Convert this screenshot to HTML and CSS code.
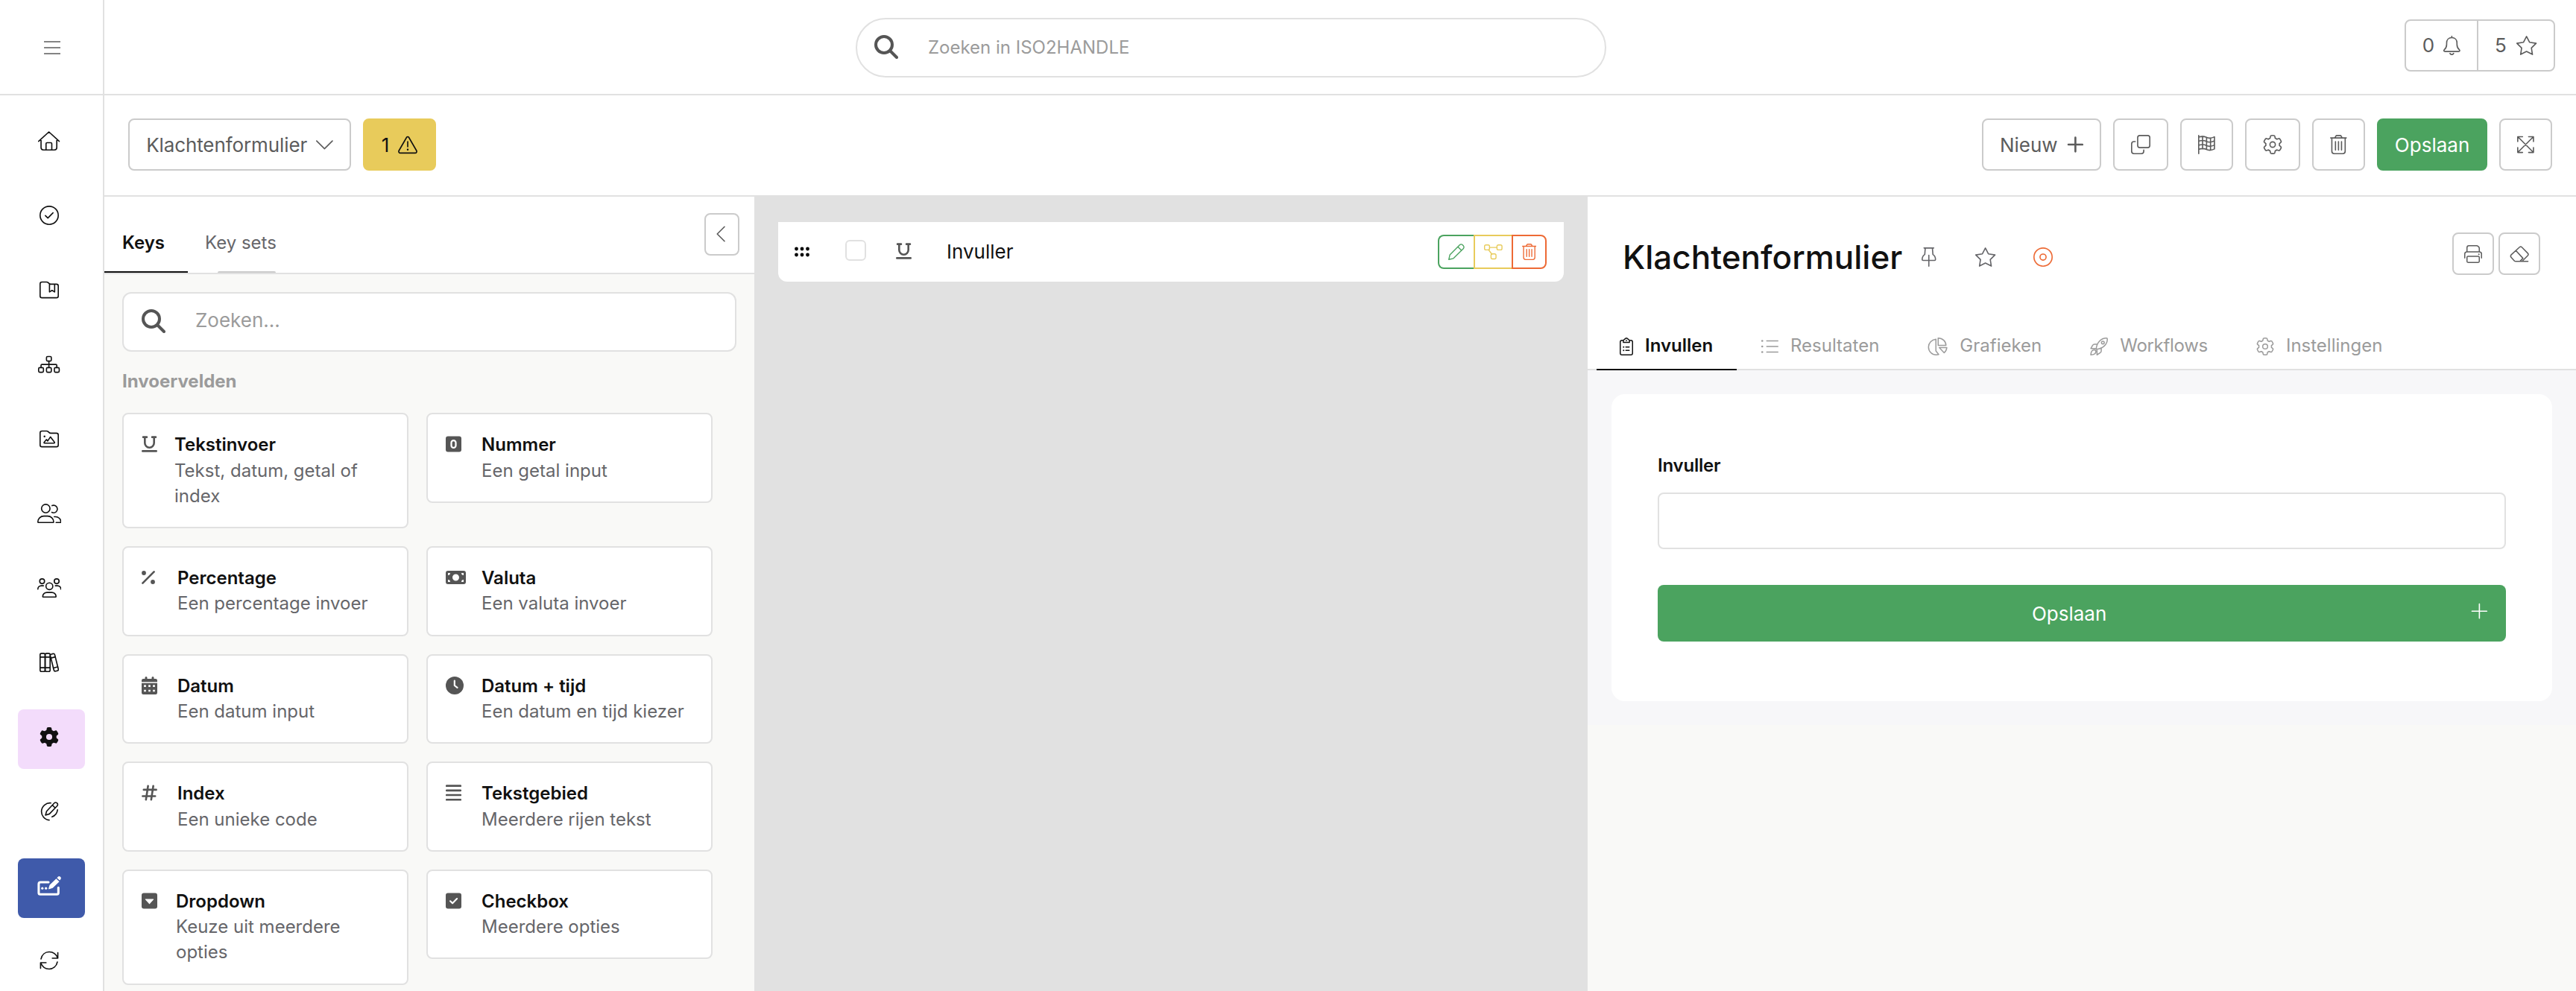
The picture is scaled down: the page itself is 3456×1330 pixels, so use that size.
FILE: index.html
```
<!DOCTYPE html>
<html lang="nl">
<head>
    <meta charset="UTF-8">
    <meta name="viewport" content="width=device-width, initial-scale=1.0">
    <title>Klachtenformulier</title>
    <link rel="stylesheet" href="styles.css">
</head>
<body>
    <!-- shared icons -->
    <svg class="sprite">
        <symbol id="search" viewBox="0 0 512 512">
            <g fill="none" stroke="currentColor" stroke-width="64" stroke-linecap="round"><circle cx="208" cy="208" r="176"/><path d="M336 336L480 480"/></g>
        </symbol>
        <symbol id="underline" viewBox="0 0 448 512">
            <path fill="none" stroke="currentColor" stroke-width="56" stroke-linecap="round" d="M44 56h104M300 56h104M92 56v168a132 132 0 0 0 264 0V56M28 456h392"/>
        </symbol>
        <symbol id="gear" viewBox="0 0 512 512">
            <g fill="none" stroke="currentColor" stroke-width="34" transform="translate(16 16) scale(.9375)"><path d="M495.9 166.6c3.2 8.7 .5 18.4-6.4 24.6l-43.3 39.4c1.1 8.3 1.7 16.8 1.7 25.4s-.6 17.1-1.7 25.4l43.3 39.4c6.9 6.2 9.6 15.9 6.4 24.6c-4.4 11.9-9.7 23.3-15.8 34.3l-4.7 8.1c-6.6 11-14 21.4-22.1 31.2c-5.9 7.2-15.7 9.6-24.5 6.8l-55.7-17.7c-13.4 10.3-28.2 18.9-44 25.4l-12.5 57.1c-2 9.1-9 16.3-18.2 17.8c-13.8 2.3-28 3.5-42.5 3.5s-28.7-1.2-42.5-3.5c-9.2-1.5-16.2-8.7-18.2-17.8l-12.5-57.1c-15.8-6.5-30.6-15.1-44-25.4L83.1 425.9c-8.8 2.8-18.6 .3-24.5-6.8c-8.1-9.8-15.5-20.2-22.1-31.2l-4.7-8.1c-6.1-11-11.4-22.4-15.8-34.3c-3.2-8.7-.5-18.4 6.4-24.6l43.3-39.4C64.6 273.1 64 264.6 64 256s.6-17.1 1.7-25.4L22.4 191.2c-6.9-6.2-9.6-15.9-6.4-24.6c4.4-11.9 9.7-23.3 15.8-34.3l4.7-8.1c6.6-11 14-21.4 22.1-31.2c5.9-7.2 15.7-9.6 24.5-6.8l55.7 17.7c13.4-10.3 28.2-18.9 44-25.4l12.5-57.1c2-9.1 9-16.3 18.2-17.8C227.3 1.2 241.5 0 256 0s28.7 1.2 42.5 3.5c9.2 1.5 16.2 8.7 18.2 17.8l12.5 57.1c15.8 6.5 30.6 15.1 44 25.4l55.7-17.7c8.8-2.8 18.6-.3 24.5 6.8c8.1 9.8 15.5 20.2 22.1 31.2l4.7 8.1c6.1 11 11.4 22.4 15.8 34.3z"/><circle cx="256" cy="256" r="76"/></g>
        </symbol>
        <symbol id="trash" viewBox="0 0 448 512">
            <path fill="none" stroke="currentColor" stroke-width="32" stroke-linecap="round" stroke-linejoin="round" d="M16 80h416M128 80l26-48c6-10 14-16 26-16h88c12 0 20 6 26 16l26 48M48 80v352a64 64 0 0 0 64 64h224a64 64 0 0 0 64-64V80M144 176v224M224 176v224M304 176v224"/>
        </symbol>
        <symbol id="star" viewBox="0 0 576 512">
            <path fill="none" stroke="currentColor" stroke-width="32" stroke-linejoin="round" d="M288 18L367 172 542 199 417 323 444 494 288 414 132 494 159 323 34 199 209 172z"/>
        </symbol>
    </svg>

    <header class="topbar">
        <div class="menu-toggle">
            <svg class="icon line" viewBox="0 0 448 512"><path d="M12 98h424M12 256h424M12 414h424"/></svg>
        </div>
        <div class="topbar-main">
            <div class="search search-round">
                <svg class="icon-search" viewBox="0 0 512 512"><use href="#search"/></svg>
                <span>Zoeken in ISO2HANDLE</span>
            </div>
            <div class="counters">
                <div class="counter">0 <svg class="icon line" viewBox="0 0 448 512"><path d="M224 14v34M224 48c-86 0-136 62-136 140v36c0 62-20 106-60 142-24 24-14 50 16 50h360c30 0 40-26 16-50-40-36-60-80-60-142v-36c0-78-50-140-136-140zM176 466c8 20 26 32 48 32s40-12 48-32"/></svg></div>
                <div class="counter">5 <svg class="icon" viewBox="0 0 576 512"><use href="#star"/></svg></div>
            </div>
        </div>
    </header>

    <div class="layout">
        <nav class="sidebar">
            <a class="nav-item"><svg class="icon line" viewBox="0 0 576 512"><path d="M16 268L288 20l272 248M80 214v218a64 64 0 0 0 64 64h288a64 64 0 0 0 64-64V214M212 496V332a28 28 0 0 1 28-28h96a28 28 0 0 1 28 28v164"/></svg></a>
            <a class="nav-item"><svg class="icon line" viewBox="0 0 512 512"><circle cx="256" cy="256" r="240"/><path d="M155 262l66 66 136-138"/></svg></a>
            <a class="nav-item"><svg class="icon line" viewBox="0 0 512 512"><path d="M64 48h122c17 0 33 7 45 19l20 20c12 12 28 19 45 19h152a48 48 0 0 1 48 48v262a48 48 0 0 1-48 48H64a48 48 0 0 1-48-48V96a48 48 0 0 1 48-48zM264 106v206l68-44 68 44V106"/></svg></a>
            <a class="nav-item"><svg class="icon line" viewBox="0 0 576 512"><rect x="224" y="48" width="128" height="122" rx="30"/><rect x="16" y="342" width="128" height="122" rx="30"/><rect x="224" y="342" width="128" height="122" rx="30"/><rect x="432" y="342" width="128" height="122" rx="30"/><path d="M288 170v172M80 342v-60a24 24 0 0 1 24-24h368a24 24 0 0 1 24 24v60"/></svg></a>
            <a class="nav-item"><svg class="icon line" viewBox="0 0 512 512"><path d="M64 48h122c17 0 33 7 45 19l20 20c12 12 28 19 45 19h152a48 48 0 0 1 48 48v262a48 48 0 0 1-48 48H64a48 48 0 0 1-48-48V96a48 48 0 0 1 48-48zM124 344l58-70 34 38 72-108 108 140c8 12 2 24-12 24H132c-14 0-18-12-8-24z"/><circle class="dot" cx="132" cy="192" r="24"/></svg></a>
            <a class="nav-item"><svg class="icon line" viewBox="0 0 640 512"><circle cx="224" cy="128" r="112"/><path d="M16 482c0-87 72-154 160-154h96c88 0 160 67 160 154 0 8-6 14-14 14H30c-8 0-14-6-14-14zM392 50c12-6 26-8 40-8a98 98 0 0 1 0 198c-18 0-34-4-48-12M448 344h32c80 0 144 62 144 138 0 8-6 14-14 14H496"/></svg></a>
            <a class="nav-item"><svg class="icon line" viewBox="0 0 640 512"><circle cx="128" cy="80" r="64"/><circle cx="512" cy="80" r="64"/><circle cx="320" cy="212" r="90"/><path d="M16 288c0-50 40-88 90-88h56M624 288c0-50-40-88-90-88h-56M144 482c0-60 50-106 112-106h128c62 0 112 46 112 106 0 8-6 14-14 14H158c-8 0-14-6-14-14z"/></svg></a>
            <a class="nav-item"><svg class="icon line" viewBox="0 0 512 512"><rect x="16" y="16" width="132" height="480" rx="40"/><rect x="148" y="16" width="132" height="480" rx="40"/><path d="M16 116h264M16 396h264"/><g transform="rotate(-14 392 258)"><rect x="332" y="26" width="120" height="464" rx="36"/><path d="M332 122h120M332 392h120"/></g></svg></a>
            <a class="nav-item nav-pink"><svg class="icon" viewBox="0 0 512 512"><path fill="currentColor" d="M495.9 166.6c3.2 8.7 .5 18.4-6.4 24.6l-43.3 39.4c1.1 8.3 1.7 16.8 1.7 25.4s-.6 17.1-1.7 25.4l43.3 39.4c6.9 6.2 9.6 15.9 6.4 24.6c-4.4 11.9-9.7 23.3-15.8 34.3l-4.7 8.1c-6.6 11-14 21.4-22.1 31.2c-5.9 7.2-15.7 9.6-24.5 6.8l-55.7-17.7c-13.4 10.3-28.2 18.9-44 25.4l-12.5 57.1c-2 9.1-9 16.3-18.2 17.8c-13.8 2.3-28 3.5-42.5 3.5s-28.7-1.2-42.5-3.5c-9.2-1.5-16.2-8.7-18.2-17.8l-12.5-57.1c-15.8-6.5-30.6-15.1-44-25.4L83.1 425.9c-8.8 2.8-18.6 .3-24.5-6.8c-8.1-9.8-15.5-20.2-22.1-31.2l-4.7-8.1c-6.1-11-11.4-22.4-15.8-34.3c-3.2-8.7-.5-18.4 6.4-24.6l43.3-39.4C64.6 273.1 64 264.6 64 256s.6-17.1 1.7-25.4L22.4 191.2c-6.9-6.2-9.6-15.9-6.4-24.6c4.4-11.9 9.7-23.3 15.8-34.3l4.7-8.1c6.6-11 14-21.4 22.1-31.2c5.9-7.2 15.7-9.6 24.5-6.8l55.7 17.7c13.4-10.3 28.2-18.9 44-25.4l12.5-57.1c2-9.1 9-16.3 18.2-17.8C227.3 1.2 241.5 0 256 0s28.7 1.2 42.5 3.5c9.2 1.5 16.2 8.7 18.2 17.8l12.5 57.1c15.8 6.5 30.6 15.1 44 25.4l55.7-17.7c8.8-2.8 18.6-.3 24.5 6.8c8.1 9.8 15.5 20.2 22.1 31.2l4.7 8.1c6.1 11 11.4 22.4 15.8 34.3zM256 336a80 80 0 1 0 0-160 80 80 0 1 0 0 160z"/></svg></a>
            <a class="nav-item"><svg class="icon line" viewBox="0 0 512 512"><path d="M300 34A226 226 0 1 0 256 484M476 214A226 226 0 0 1 330 400M158 354l30-104L386 40c22-24 54-24 78-4s22 56 0 78L262 322zM340 88l76 76"/></svg></a>
            <a class="nav-item nav-blue"><svg class="icon" viewBox="0 0 640 512"><path fill="none" stroke="currentColor" stroke-width="60" stroke-linecap="round" stroke-linejoin="round" d="M296 158H86a48 48 0 0 0-48 48v232a40 40 0 0 0 40 40h440a40 40 0 0 0 40-40V300"/><g fill="currentColor"><circle cx="134" cy="318" r="32"/><circle cx="230" cy="318" r="32"/><path d="M300 322l26-92L500 62l82 80-174 168-92 32c-12 4-20-6-16-20zM520 42l26-26c20-20 44-18 64 0s24 48 4 68l-22 22z"/></g></svg></a>
            <a class="nav-item"><svg class="icon line" viewBox="0 0 512 512"><path d="M484 48v150H338M478 192C438 84 352 30 256 30 150 30 64 100 40 216M28 464V314h146M34 320c40 108 126 162 222 162 106 0 192-70 216-186"/></svg></a>
        </nav>

        <div class="content">
            <div class="toolbar">
                <button class="btn btn-select">Klachtenformulier <svg class="icon line" viewBox="0 0 448 512"><path d="M16 160l208 208 208-208"/></svg></button>
                <button class="btn btn-warning">1 <svg class="icon line" viewBox="0 0 512 512"><path d="M256 48c-12 0-22 6-28 16L26 414c-18 30 0 66 34 66h392c34 0 52-36 34-66L284 64c-6-10-16-16-28-16zM256 176v140"/><circle class="dot" cx="256" cy="388" r="24"/></svg></button>
                <div class="toolbar-actions">
                    <button class="btn">Nieuw <svg class="icon line thick" viewBox="0 0 448 512"><path d="M224 72v368M40 256h368"/></svg></button>
                    <button class="btn"><svg class="icon line" viewBox="0 0 512 512"><rect x="176" y="16" width="320" height="320" rx="56"/><path d="M112 176H80a64 64 0 0 0-64 64v192a64 64 0 0 0 64 64h192a64 64 0 0 0 64-64v-32"/></svg></button>
                    <button class="btn"><svg class="icon line" viewBox="0 0 448 512"><path d="M16 16v480M16 60c60-20 130-30 190 0s150 34 226-8v320c-76 42-166 38-226 8s-130-20-190 4M16 166c60-20 130-30 190 0s150 34 226-8M16 276c60-20 130-30 190 0s150 34 226-8M118 40v330M224 68v320M328 84v320"/></svg></button>
                    <button class="btn"><svg class="icon" viewBox="0 0 512 512"><use href="#gear"/></svg></button>
                    <button class="btn"><svg class="icon" viewBox="0 0 448 512"><use href="#trash"/></svg></button>
                    <button class="btn btn-success">Opslaan</button>
                    <button class="btn"><svg class="icon line" viewBox="0 0 448 512"><path d="M16 176V48h128M304 48h128v128M432 336v128H304M144 464H16V336M18 50l412 412M430 50L18 462"/></svg></button>
                </div>
            </div>

            <div class="panels">
                <section class="keys">
                    <div class="keys-header">
                        <div class="keys-tab active">Keys</div>
                        <div class="keys-tab">Key sets<i class="drag-handle"></i></div>
                        <button class="btn btn-small btn-collapse"><svg class="icon line" viewBox="0 0 320 512"><path d="M256 64L64 256l192 192"/></svg></button>
                    </div>
                    <div class="keys-body">
                        <div class="search">
                            <svg class="icon-search" viewBox="0 0 512 512"><use href="#search"/></svg>
                            <span>Zoeken...</span>
                        </div>
                        <h3>Invoervelden</h3>
                        <div class="cards">
                            <div class="card card-tekst">
                                <div class="card-icon"><svg viewBox="0 0 448 512"><use href="#underline"/></svg></div>
                                <div><b>Tekstinvoer</b><p>Tekst, datum, getal of index</p></div>
                            </div>
                            <div class="card">
                                <div class="card-icon"><svg viewBox="0 0 448 512"><path fill="currentColor" fill-rule="evenodd" d="M64 32h320a64 64 0 0 1 64 64v320a64 64 0 0 1-64 64H64a64 64 0 0 1-64-64V96a64 64 0 0 1 64-64zM224 128c-53 0-88 40-88 92v72c0 52 35 92 88 92s88-40 88-92v-72c0-52-35-92-88-92zM224 176c24 0 40 18 40 44v72c0 26-16 44-40 44s-40-18-40-44v-72c0-26 16-44 40-44z"/></svg></div>
                                <div><b>Nummer</b><p>Een getal input</p></div>
                            </div>
                            <div class="card">
                                <div class="card-icon"><svg viewBox="0 0 384 512"><path fill="none" stroke="currentColor" stroke-width="56" stroke-linecap="round" d="M354 94L30 418"/><circle fill="currentColor" cx="64" cy="128" r="62"/><circle fill="currentColor" cx="320" cy="384" r="62"/></svg></div>
                                <div><b>Percentage</b><p>Een percentage invoer</p></div>
                            </div>
                            <div class="card">
                                <div class="card-icon"><svg viewBox="0 0 576 512"><path fill="currentColor" fill-rule="evenodd" d="M64 64h448a64 64 0 0 1 64 64v256a64 64 0 0 1-64 64H64a64 64 0 0 1-64-64V128a64 64 0 0 1 64-64zM64 192a64 64 0 0 0 64-64H64zM64 320v64h64a64 64 0 0 0-64-64zM512 192v-64h-64a64 64 0 0 0 64 64zM512 320a64 64 0 0 0-64 64h64zM288 352a96 96 0 1 0 0-192 96 96 0 0 0 0 192z"/></svg></div>
                                <div><b>Valuta</b><p>Een valuta invoer</p></div>
                            </div>
                            <div class="card">
                                <div class="card-icon"><svg viewBox="0 0 448 512"><path fill="currentColor" fill-rule="evenodd" d="M96 32a32 32 0 0 1 64 0v32h128V32a32 32 0 0 1 64 0v32h48a48 48 0 0 1 48 48v40H0v-40a48 48 0 0 1 48-48h48zM0 184h448v280a48 48 0 0 1-48 48H48a48 48 0 0 1-48-48zM68 240v56h56v-56zM196 240v56h56v-56zM324 240v56h56v-56zM68 376v56h56v-56zM196 376v56h56v-56zM324 376v56h56v-56z"/></svg></div>
                                <div><b>Datum</b><p>Een datum input</p></div>
                            </div>
                            <div class="card">
                                <div class="card-icon"><svg viewBox="0 0 512 512"><circle fill="currentColor" cx="256" cy="256" r="256"/><path fill="none" stroke="#fff" stroke-width="46" stroke-linecap="round" stroke-linejoin="round" d="M252 118v138l80 60"/></svg></div>
                                <div><b>Datum + tijd</b><p>Een datum en tijd kiezer</p></div>
                            </div>
                            <div class="card">
                                <div class="card-icon"><svg viewBox="0 0 448 512"><path fill="none" stroke="currentColor" stroke-width="56" stroke-linecap="round" d="M60 168h358M30 352h358M184 60l-60 392M334 60l-60 392"/></svg></div>
                                <div><b>Index</b><p>Een unieke code</p></div>
                            </div>
                            <div class="card">
                                <div class="card-icon"><svg viewBox="0 0 448 512"><path fill="none" stroke="currentColor" stroke-width="56" stroke-linecap="round" d="M25 57h398M25 189h398M25 321h398M25 453h398"/></svg></div>
                                <div><b>Tekstgebied</b><p>Meerdere rijen tekst</p></div>
                            </div>
                            <div class="card card-dropdown">
                                <div class="card-icon"><svg viewBox="0 0 448 512"><rect fill="currentColor" y="32" width="448" height="448" rx="64"/><path fill="#fff" stroke="#fff" stroke-width="24" stroke-linejoin="round" d="M114 212h220L224 336z"/></svg></div>
                                <div><b>Dropdown</b><p>Keuze uit meerdere opties</p></div>
                            </div>
                            <div class="card">
                                <div class="card-icon"><svg viewBox="0 0 448 512"><rect fill="currentColor" y="32" width="448" height="448" rx="64"/><path fill="none" stroke="#fff" stroke-width="46" stroke-linecap="round" stroke-linejoin="round" d="M130 262l64 64 128-132"/></svg></div>
                                <div><b>Checkbox</b><p>Meerdere opties</p></div>
                            </div>
                        </div>
                    </div>
                </section>

                <section class="builder">
                    <div class="field-row">
                        <svg class="grip" viewBox="0 0 20 14"><circle cx="2.5" cy="3" r="2.4"/><circle cx="10" cy="3" r="2.4"/><circle cx="17.5" cy="3" r="2.4"/><circle cx="2.5" cy="11" r="2.4"/><circle cx="10" cy="11" r="2.4"/><circle cx="17.5" cy="11" r="2.4"/></svg>
                        <span class="checkbox"></span>
                        <svg class="field-icon" viewBox="0 0 448 512"><use href="#underline"/></svg>
                        <span class="field-name">Invuller</span>
                        <div class="field-actions">
                            <button class="edit"><svg class="line" viewBox="0 0 512 512"><path d="M18 494l32-144L356 42c26-26 66-26 92 0l22 22c26 26 26 66 0 92L162 462zM300 98l114 114"/></svg></button>
                            <button class="flow"><svg class="line" viewBox="0 0 576 512"><rect x="16" y="40" width="156" height="156" rx="44"/><rect x="404" y="40" width="156" height="156" rx="44"/><rect x="218" y="320" width="156" height="156" rx="44"/><path d="M172 118h232M140 192l104 134"/></svg></button>
                            <button class="remove"><svg viewBox="0 0 448 512"><use href="#trash"/></svg></button>
                        </div>
                    </div>
                </section>

                <section class="preview">
                    <div class="preview-header">
                        <h1>Klachtenformulier</h1>
                        <svg class="icon line pin" viewBox="0 0 384 512"><path d="M64 16h256M98 16L84 190C40 216 16 262 16 320c0 16 8 24 24 24h304c16 0 24-8 24-24 0-58-24-104-68-130L286 16M192 208v288"/></svg>
                        <svg class="icon fav" viewBox="0 0 576 512"><use href="#star"/></svg>
                        <svg class="icon line target" viewBox="0 0 512 512"><circle cx="256" cy="256" r="240"/><circle cx="256" cy="256" r="80"/></svg>
                        <div class="preview-actions">
                            <button class="btn btn-small"><svg class="line" viewBox="0 0 512 512"><path d="M80 192V72a56 56 0 0 1 56-56h220c16 0 30 6 40 16l24 24c8 8 12 20 12 32v104M16 368V256a64 64 0 0 1 64-64h352a64 64 0 0 1 64 64v112"/><rect x="80" y="320" width="352" height="176" rx="30"/><circle class="dot" cx="420" cy="260" r="22"/></svg></button>
                            <button class="btn btn-small"><svg class="line" viewBox="0 0 576 512"><path d="M524 464H172c-16 0-30-6-40-18L46 350c-20-22-20-54 0-76L282 60c22-20 46-20 66 0l170 172c20 22 20 44 0 66L354 464M178 154l202 222-88 88"/></svg></button>
                        </div>
                    </div>
                    <div class="tabs">
                        <div class="tab active"><svg class="line" viewBox="0 0 384 512"><path d="M104 80H64a48 48 0 0 0-48 48v320a48 48 0 0 0 48 48h256a48 48 0 0 0 48-48V128a48 48 0 0 0-48-48h-40M104 80l60-52c18-14 38-14 56 0l60 52v56H104zM176 272h96M176 368h96"/><circle class="dot" cx="112" cy="272" r="22"/><circle class="dot" cx="112" cy="368" r="22"/><circle class="dot" cx="192" cy="84" r="18"/></svg>Invullen</div>
                        <div class="tab"><svg class="line" viewBox="0 0 512 512"><path d="M176 96h320M176 256h320M176 416h320"/><circle class="dot" cx="48" cy="96" r="28"/><circle class="dot" cx="48" cy="256" r="28"/><circle class="dot" cx="48" cy="416" r="28"/></svg>Resultaten</div>
                        <div class="tab"><svg class="line" viewBox="0 0 576 512"><path d="M304 16v208h224c0-116-96-208-224-208zM240 50C116 66 28 156 28 274c0 126 98 222 222 222 24 0 48-4 70-10l-30-40-50-62zM336 288h216c-6 60-32 112-76 150z"/></svg>Grafieken</div>
                        <div class="tab tab-flows"><svg class="line" viewBox="0 0 512 512"><path d="M176 330C190 150 310 16 470 16c20 0 26 6 26 26 0 160-134 280-314 294zM210 190H130c-24 0-42 10-54 30L24 312h128M322 302v80c0 24-10 42-30 54l-92 60V360M120 350c-60 0-92 40-98 146 106-6 146-38 146-98 0-28-20-48-48-48z"/><circle cx="368" cy="144" r="40"/></svg>Workflows</div>
                        <div class="tab"><svg viewBox="0 0 512 512"><use href="#gear"/></svg>Instellingen</div>
                    </div>
                    <div class="preview-body">
                        <form class="form">
                            <label>Invuller</label>
                            <input type="text">
                            <button type="button" class="submit"><span>Opslaan</span><svg class="line" viewBox="0 0 448 512"><path d="M224 52v376M28 240h392"/></svg></button>
                        </form>
                    </div>
                </section>
            </div>
        </div>
    </div>
</body>
</html>
```
FILE: styles.css
```
* {
    box-sizing: border-box;
}
body {
    margin: 0;
    height: 1330px;
    overflow: hidden;
    display: flex;
    flex-direction: column;
    font-family: Inter, 'Liberation Sans', sans-serif;
    font-size: 24px;
    line-height: 1.428571;
    color: #111;
    background-color: #fff;
}
h1, h3, p {
    margin: 0;
}
svg {
    display: block;
    flex: none;
    height: 24px;
}
button {
    font-family: inherit;
    color: inherit;
    background-color: #fff;
    margin: 0;
}
.sprite {
    display: none;
}
.icon {
    height: 26px;
}
.line {
    fill: none;
    stroke: currentColor;
    stroke-width: 32;
    stroke-linecap: round;
    stroke-linejoin: round;
}
.thick {
    stroke-width: 52;
}
.dot {
    fill: currentColor;
    stroke: none;
}

/* top bar */
.topbar {
    display: flex;
    flex: none;
    height: 128px;
    border-bottom: 2px solid #e1e1e1;
}
.menu-toggle {
    width: 140px;
    border-right: 2px solid #e1e1e1;
    display: flex;
    align-items: center;
    justify-content: center;
    color: #5c5c5c;
    padding: 0 0 0 2px;
}
.menu-toggle .icon {
    margin-top: 2px;
}
.topbar-main {
    flex: 1;
    display: flex;
    align-items: flex-start;
    justify-content: space-between;
    padding: 24px 28px 0 1008px;
}
.search {
    display: flex;
    align-items: center;
    height: 80px;
    padding-left: 24px;
    border: 2px solid #e1e1e1;
    border-radius: 12px;
    background-color: #fff;
    color: #9b9b9b;
    font-size: 26px;
}
.search-round {
    width: 1007px;
    border-radius: 40px;
    padding-left: 23px;
    font-size: 24px;
}
.icon-search {
    height: 32px;
    margin: 0 40px 3px 0;
    color: #555;
}
.counters {
    display: flex;
    height: 70px;
    margin-top: 2px;
    border: 2px solid #cbcbcb;
    border-radius: 8px;
}
.counter {
    display: flex;
    align-items: center;
    gap: 12px;
    padding: 0 22px;
    font-size: 26px;
    color: #5c5c5c;
}
.counter + .counter {
    border-left: 2px solid #cbcbcb;
}

/* sidebar */
.layout {
    flex: 1;
    display: flex;
    min-height: 0;
}
.sidebar {
    width: 140px;
    flex: none;
    border-right: 2px solid #e1e1e1;
    padding: 24px 24px 0;
    display: flex;
    flex-direction: column;
    gap: 20px;
}
.nav-item {
    display: flex;
    align-items: center;
    justify-content: center;
    flex: none;
    height: 80px;
    padding: 0 6px 6px 0;
    border-radius: 8px;
}
.nav-pink {
    background-color: #f3dcfb;
}
.nav-blue {
    background-color: #3f5aaa;
    color: #fff;
}

/* toolbar */
.content {
    flex: 1;
    display: flex;
    flex-direction: column;
    min-width: 0;
}
.toolbar {
    display: flex;
    align-items: center;
    gap: 16px;
    flex: none;
    height: 136px;
    padding: 0 32px 2px;
    border-bottom: 2px solid #e1e1e1;
}
.toolbar-actions {
    display: flex;
    gap: 16px;
    margin-left: auto;
}
.btn {
    display: flex;
    align-items: center;
    justify-content: center;
    gap: 12px;
    height: 70px;
    padding: 0 22px;
    border: 2px solid #cbcbcb;
    border-radius: 8px;
    font-size: 26px;
    color: #5c5c5c;
}
.btn-select {
    width: 299px;
    letter-spacing: -0.1px;
}
.btn-warning {
    width: 98px;
    padding: 0;
    background-color: #e8cb5b;
    border-color: #e8cb5b;
    color: #111;
}
.btn-success {
    background-color: #4ba35f;
    border-color: #4ba35f;
    color: #fff;
}
.btn-small {
    width: 56px;
    height: 57px;
    padding: 0;
}

/* keys panel */
.panels {
    flex: 1;
    display: flex;
    min-height: 0;
}
.keys {
    width: 872px;
    flex: none;
    background-color: #f9f9f7;
}
.keys-header {
    display: flex;
    height: 104px;
    background-color: #fff;
    border-bottom: 2px solid #e1e1e1;
}
.keys-tab {
    position: relative;
    padding: 45px 31px 0 23px;
    color: #66666a;
}
.keys-tab.active {
    width: 112px;
    padding-left: 24px;
    font-weight: 600;
    color: #111;
    border-bottom: 2px solid #111;
}
.drag-handle {
    position: absolute;
    left: 40px;
    bottom: 0;
    width: 78px;
    height: 2px;
    border-radius: 2px 2px 0 0;
    background-color: #cbcbcb;
}
.btn-collapse {
    width: 47px;
    margin: 22px 20px 0 auto;
}
.btn-collapse .icon {
    margin: 0 2px 1px 0;
}
.keys-body {
    padding: 24px;
}
h3 {
    margin: 23px 0 25px;
    font-size: 24px;
    font-weight: 700;
    color: #9b9b9b;
}
.keys-body .search {
    width: 824px;
}
.keys-body .search span {
    padding-bottom: 4px;
}
.cards {
    display: grid;
    grid-template-columns: 384px 384px;
    gap: 24px;
    align-items: start;
}
.card {
    display: flex;
    padding: 24px;
    border: 2px solid #e1e1e1;
    border-radius: 8px;
    background-color: #fff;
}
.card b {
    display: block;
    font-weight: 600;
}
.card p {
    color: #66666a;
}
.card-icon {
    width: 48px;
    flex: none;
    padding-top: 4px;
    color: #555;
}
.card-tekst .card-icon {
    width: 44px;
}
.card-dropdown .card-icon {
    width: 46px;
}

/* builder */
.builder {
    width: 1118px;
    flex: none;
    padding: 34px 32px;
    background-color: #e1e1e1;
}
.field-row {
    display: flex;
    align-items: center;
    height: 80px;
    padding: 0 23px 0 22px;
    border-radius: 0 0 12px 12px;
    background-color: #fff;
    font-size: 26px;
}
.grip {
    width: 20px;
    height: 14px;
}
.checkbox {
    width: 28px;
    height: 28px;
    margin: 0 40px 4px 48px;
    border: 2px solid #e1e1e1;
    border-radius: 6px;
}
.field-icon {
    margin-bottom: 3px;
    color: #555;
}
.field-name {
    margin-left: 47px;
}
.field-actions {
    display: flex;
    margin-left: auto;
}
.field-actions button {
    display: flex;
    align-items: center;
    justify-content: center;
    height: 46px;
    padding: 0;
    border: 2px solid;
}
.field-actions svg {
    height: 22px;
}
.field-actions .edit {
    width: 48px;
    border-right: 0;
    border-radius: 8px 0 0 8px;
    color: #4ba35f;
}
.field-actions .flow {
    width: 51px;
    border-right: 0;
    color: #e8cb5b;
}
.field-actions .remove {
    width: 47px;
    border-radius: 0 8px 8px 0;
    color: #ed6a35;
}

/* preview */
.preview {
    flex: 1;
    background-color: #f9f9f7;
}
.preview-header {
    display: flex;
    align-items: center;
    height: 162px;
    padding: 0 48px 0 47px;
    background-color: #fff;
    color: #66666a;
}
h1 {
    font-size: 44px;
    font-weight: 500;
    line-height: 60px;
    color: #111;
}
.pin {
    margin-left: 26px;
}
.fav {
    margin-left: 51px;
}
.target {
    margin-left: 50px;
    color: #ed6a35;
}
.preview-actions {
    display: flex;
    gap: 6px;
    margin: 0 0 9px auto;
}
.tabs {
    display: flex;
    height: 71px;
    padding-left: 12px;
    background-color: #fff;
    border-bottom: 2px solid #e1e1e1;
    color: #9b9b9b;
}
.tab {
    display: flex;
    align-items: center;
    gap: 16px;
    height: 71px;
    padding: 6px 33px 0 32px;
}
.tab.active {
    width: 188px;
    padding: 8px 0 0 31px;
    color: #111;
    font-weight: 600;
    border-bottom: 2px solid #111;
}
.tab-flows {
    letter-spacing: -0.3px;
}
.preview-body {
    height: 476px;
    padding: 32px;
    background-color: #f7f7f9;
}
.form {
    height: 412px;
    padding: 79px 62px 0;
    border-radius: 18px;
    background-color: #fff;
}
.form label {
    display: block;
    font-weight: 600;
    letter-spacing: -0.2px;
}
.form input {
    display: block;
    width: 100%;
    height: 76px;
    margin: 19px 0 48px;
    border: 2px solid #e1e1e1;
    border-radius: 8px;
}
.submit {
    display: flex;
    align-items: center;
    width: 100%;
    height: 76px;
    padding: 0 24px;
    border: 0;
    border-radius: 8px;
    background-color: #4ba35f;
    color: #fff;
    font-size: 26px;
}
.submit span {
    flex: 1;
    margin-right: 11px;
}
.submit svg {
    height: 26px;
    margin-bottom: 4px;
}
```
